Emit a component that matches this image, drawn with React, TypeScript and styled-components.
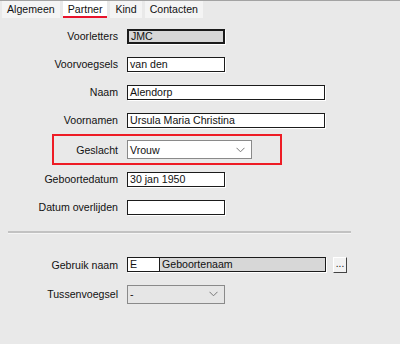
import React from "react";
import styled, { createGlobalStyle } from "styled-components";

const GlobalStyle = createGlobalStyle`
  html, body {
    margin: 0;
    padding: 0;
    background: #e9e9e9;
  }
  body {
    font-family: "Liberation Sans", Arial, sans-serif;
    font-size: 10.6px;
    color: #111;
  }
`;

const Chevron = () => (
  <svg width="9" height="6" viewBox="0 0 9 6">
    <path d="M0.5 0.8 L4.5 4.8 L8.5 0.8" fill="none" stroke="#777" strokeWidth="1" />
  </svg>
);

const App = () => {
  return (
    <Page>
      <GlobalStyle />
      <TabBar>
        <Tab>Algemeen</Tab>
        <Tab $active>Partner</Tab>
        <Tab>Kind</Tab>
        <Tab>Contacten</Tab>
      </TabBar>
      <Form>
        <Row>
          <Label>Voorletters</Label>
          <Input $width={98} $disabled>
            JMC
          </Input>
        </Row>
        <Row>
          <Label>Voorvoegsels</Label>
          <Input $width={98}>van den</Input>
        </Row>
        <Row>
          <Label>Naam</Label>
          <Input $width={198}>Alendorp</Input>
        </Row>
        <Row>
          <Label>Voornamen</Label>
          <Input $width={198}>Ursula Maria Christina</Input>
        </Row>
        <Highlight>
          <Row $labelWidth={64} $height={27}>
            <Label>Geslacht</Label>
            <Select $width={125}>
              <span>Vrouw</span>
              <Chevron />
            </Select>
          </Row>
        </Highlight>
        <Row>
          <Label>Geboortedatum</Label>
          <Input $width={98}>30 jan 1950</Input>
        </Row>
        <Row>
          <Label>Datum overlijden</Label>
          <Input $width={98} />
        </Row>
        <Separator />
        <Row $height={31}>
          <Label>Gebruik naam</Label>
          <Combined>
            <Input $width={33}>E</Input>
            <Input $width={166} $disabled $joined>
              Geboortenaam
            </Input>
            <DotButton>...</DotButton>
          </Combined>
        </Row>
        <Row>
          <Label>Tussenvoegsel</Label>
          <Select $width={98} $disabled>
            <span>-</span>
            <Chevron />
          </Select>
        </Row>
      </Form>
    </Page>
  );
};

export default App;

const Page = styled.div`
  width: 400px;
  height: 344px;
  background: #e9e9e9;
  border-top: 1px solid #a3a3a3;
  box-sizing: border-box;
  overflow: hidden;
`;

const TabBar = styled.div`
  display: flex;
  gap: 3px;
  padding-left: 2px;
  height: 17px;
`;

const Tab = styled.div<{ $active?: boolean }>`
  height: 17px;
  box-sizing: border-box;
  padding: 1px 5px 0 5px;
  line-height: 14px;
  background: ${(p) => (p.$active ? "#ffffff" : "#f4f4f4")};
  border-bottom: 2px solid ${(p) => (p.$active ? "#e8132b" : "transparent")};
  color: #111;
`;

const Form = styled.div`
  display: flex;
  flex-direction: column;
  padding-top: 4px;
`;

const Row = styled.div<{ $labelWidth?: number; $height?: number }>`
  display: grid;
  grid-template-columns: ${(p) => p.$labelWidth ?? 118}px auto;
  column-gap: 9px;
  align-items: center;
  height: ${(p) => p.$height ?? 28}px;
`;

const Label = styled.div`
  text-align: right;
  white-space: nowrap;
`;

const Input = styled.div<{ $width: number; $disabled?: boolean; $joined?: boolean }>`
  width: ${(p) => p.$width}px;
  height: 15px;
  box-sizing: border-box;
  padding: 0 2px;
  background: ${(p) => (p.$disabled ? "#d7d7d7" : "#ffffff")};
  border: ${(p) => (p.$disabled && !p.$joined ? "2px" : "1px")} solid #1b1b1b;
  border-left-width: ${(p) => (p.$joined ? "0" : undefined)};
  line-height: ${(p) => (p.$disabled && !p.$joined ? "11px" : "13px")};
  box-shadow: 1px 1px 0 #ffffff;
  white-space: nowrap;
  overflow: hidden;
`;

const Highlight = styled.div`
  margin-left: 52px;
  width: 230px;
  height: 31px;
  box-sizing: border-box;
  border: 2px solid #ee1c25;
  display: flex;
  align-items: center;
`;

const Select = styled.div<{ $width: number; $disabled?: boolean }>`
  width: ${(p) => p.$width}px;
  height: 19px;
  box-sizing: border-box;
  padding: 0 6px 0 2px;
  display: flex;
  align-items: center;
  justify-content: space-between;
  background: ${(p) => (p.$disabled ? "#e6e6e6" : "#ffffff")};
  border: 1px solid #8a8a8a;
`;

const Separator = styled.div`
  margin: 10px 0 16px 8px;
  width: 343px;
  height: 2px;
  background: #c2c2c2;
  box-shadow: 0 1px 0 #f5f5f5;
`;

const Combined = styled.div`
  display: flex;
  align-items: center;
`;

const DotButton = styled.div`
  margin-left: 7px;
  width: 14px;
  height: 16px;
  box-sizing: border-box;
  background: #f2f2f2;
  border: 1px solid #fff;
  border-right-color: #444;
  border-bottom-color: #444;
  font-size: 10px;
  line-height: 12px;
  text-align: center;
`;
